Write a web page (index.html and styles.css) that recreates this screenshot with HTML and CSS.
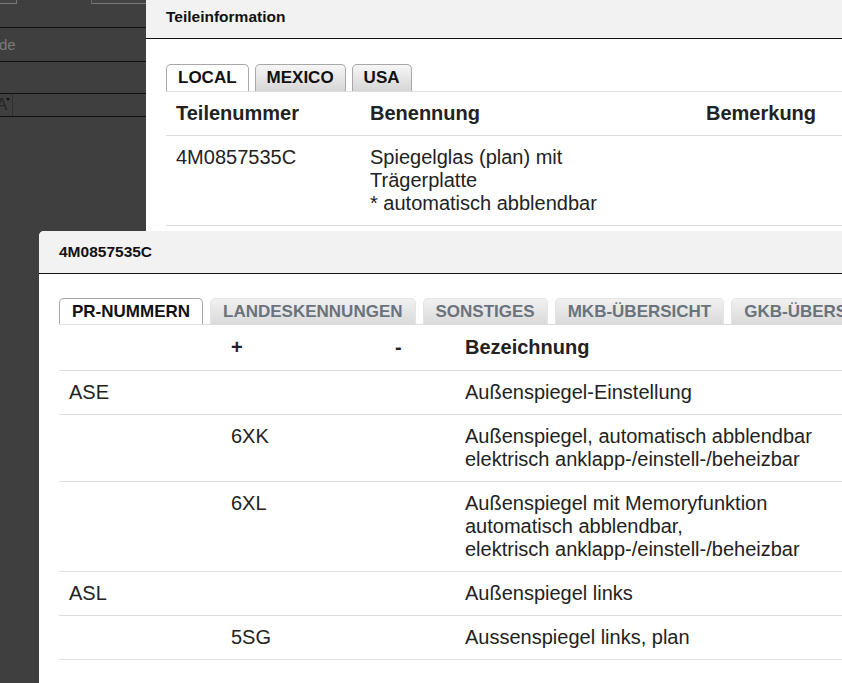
FILE: index.html
```html
<!DOCTYPE html>
<html lang="de">
<head>
<meta charset="UTF-8" />
<meta name="viewport" content="width=device-width, initial-scale=1" />
<title>Teileinformation</title>
<link rel="stylesheet" href="styles.css">
</head>
<body>
  <div class="page">
    <div class="toolbar">
      <span class="tool-btn tool-a"></span>
      <span class="tool-btn tool-b"></span>
    </div>
    <div class="page-row row-lang">de</div>
    <div class="page-row row-empty"></div>
    <div class="page-row row-select">
      <span class="select"><span class="select-text">A</span><span class="caret"></span></span>
    </div>
  </div>

  <!-- Teileinformation -->
  <section class="dialog dialog-parts">
    <header class="dialog-head">Teileinformation</header>
    <div class="dialog-body">
      <ul class="tabs">
        <li class="tab active">LOCAL</li>
        <li class="tab">MEXICO</li>
        <li class="tab">USA</li>
      </ul>
      <table class="grid parts-grid">
        <thead>
          <tr>
            <th class="c-nr">Teilenummer</th>
            <th class="c-name">Benennung</th>
            <th>Bemerkung</th>
          </tr>
        </thead>
        <tbody>
          <tr>
            <td>4M0857535C</td>
            <td>Spiegelglas (plan) mit<br>Trägerplatte<br>* automatisch abblendbar</td>
            <td></td>
          </tr>
        </tbody>
      </table>
    </div>
  </section>

  <!-- Detail zur Teilenummer -->
  <section class="dialog dialog-detail">
    <header class="dialog-head">4M0857535C</header>
    <div class="dialog-body">
      <ul class="tabs tabs-flat">
        <li class="tab active">PR-NUMMERN</li>
        <li class="tab">LANDESKENNUNGEN</li>
        <li class="tab">SONSTIGES</li>
        <li class="tab">MKB-ÜBERSICHT</li>
        <li class="tab">GKB-ÜBERSICHT</li>
      </ul>
      <table class="grid pr-grid">
        <thead>
          <tr>
            <th class="c-fam"></th>
            <th class="c-plus">+</th>
            <th class="c-minus">-</th>
            <th>Bezeichnung</th>
          </tr>
        </thead>
        <tbody>
          <tr>
            <td>ASE</td><td></td><td></td>
            <td>Außenspiegel-Einstellung</td>
          </tr>
          <tr>
            <td></td><td>6XK</td><td></td>
            <td>Außenspiegel, automatisch abblendbar<br>elektrisch anklapp-/einstell-/beheizbar</td>
          </tr>
          <tr>
            <td></td><td>6XL</td><td></td>
            <td>Außenspiegel mit Memoryfunktion<br>automatisch abblendbar,<br>elektrisch anklapp-/einstell-/beheizbar</td>
          </tr>
          <tr>
            <td>ASL</td><td></td><td></td>
            <td>Außenspiegel links</td>
          </tr>
          <tr>
            <td></td><td>5SG</td><td></td>
            <td>Aussenspiegel links, plan</td>
          </tr>
        </tbody>
      </table>
    </div>
  </section>
</body>
</html>
```

FILE: styles.css
```css
html, body {
  margin: 0;
  height: 100%;
}
body {
  font-family: "Liberation Sans", Arial, sans-serif;
  background: #3f3f3f;
  color: #222;
  overflow: hidden;
  position: relative;
}

/* page behind the dialogs */
.page {
  width: 146px;
}
.toolbar {
  height: 27px;
  border-bottom: 1px solid #111;
  position: relative;
}
.tool-btn {
  position: absolute;
  top: -2px;
  height: 5px;
  border: 1px solid #777;
  border-top: none;
  background: #444;
}
.tool-a {
  left: -1px;
  width: 16px;
}
.tool-b {
  left: 91px;
  width: 70px;
  border-left-color: #666;
}
.page-row {
  border-bottom: 1px solid #111;
  color: #7a7a7a;
  font-size: 15px;
}
.row-lang {
  height: 33px;
  line-height: 33px;
  margin-left: -1px;
}
.row-empty {
  height: 31px;
}
.row-select {
  height: 22px;
}
.select {
  display: block;
  position: relative;
  width: 12px;
  height: 22px;
  border-right: 1px solid #2e2e2e;
  overflow: hidden;
}
.select-text {
  display: block;
  margin-left: -4px;
  font-size: 17px;
  line-height: 22px;
  color: #262626;
}
.caret {
  position: absolute;
  right: 2px;
  top: 4px;
  border-left: 2px solid transparent;
  border-right: 2px solid transparent;
  border-top: 3px solid #111;
}

/* dialogs */
.dialog {
  position: absolute;
  width: 1000px;
  background: #fff;
}
.dialog-parts {
  left: 146px;
  top: -4px;
  height: 240px;
}
.dialog-detail {
  left: 39px;
  top: 231px;
  height: 480px;
  border-top-left-radius: 5px;
}
.dialog-head {
  background: #f2f2f2;
  padding: 12px 20px;
  font-size: 15.5px;
  line-height: 18px;
  font-weight: 700;
  color: #111;
  border-bottom: 1px solid #111;
  border-top-left-radius: 5px;
}
.dialog-body {
  padding: 25px 20px 0;
}
.dialog-detail .dialog-body {
  padding-top: 24px;
}

/* tabs */
.tabs {
  list-style: none;
  margin: 0;
  padding: 0;
  display: flex;
  gap: 6px;
  border-bottom: 1px solid #ddd;
}
.tab {
  font-size: 17px;
  font-weight: 700;
  line-height: 20px;
  padding: 3px 11px;
  border: 1px solid #a8a8a8;
  border-bottom: none;
  border-radius: 5px 5px 0 0;
  background: linear-gradient(#f6f6f6, #d6d6d6);
  color: #111;
  white-space: nowrap;
}
.tab.active {
  background: #fff;
}
.tabs-flat {
  gap: 7px;
}
.tabs-flat .tab {
  line-height: 19px;
  padding: 3px 12px;
  border-color: #e4e4e4;
  background: linear-gradient(#f1f1f1, #dadada);
  color: #6a737c;
}
.tabs-flat .tab.active {
  border-color: #a8a8a8;
  background: #fff;
  color: #111;
}

/* tables */
.grid {
  width: 100%;
  border-collapse: collapse;
  table-layout: fixed;
}
.grid th,
.grid td {
  text-align: left;
  vertical-align: top;
  padding: 10px;
  font-size: 20px;
  line-height: 23px;
  border-bottom: 1px solid #ddd;
}
.grid th {
  font-weight: 700;
  color: #222;
}
.grid td {
  color: #222;
}
.c-nr {
  width: 174px;
}
.c-name {
  width: 316px;
}
.pr-grid th {
  padding-top: 11px;
  padding-bottom: 11px;
}
.c-fam {
  width: 142px;
}
.c-plus {
  width: 144px;
}
.c-minus {
  width: 50px;
}
```
